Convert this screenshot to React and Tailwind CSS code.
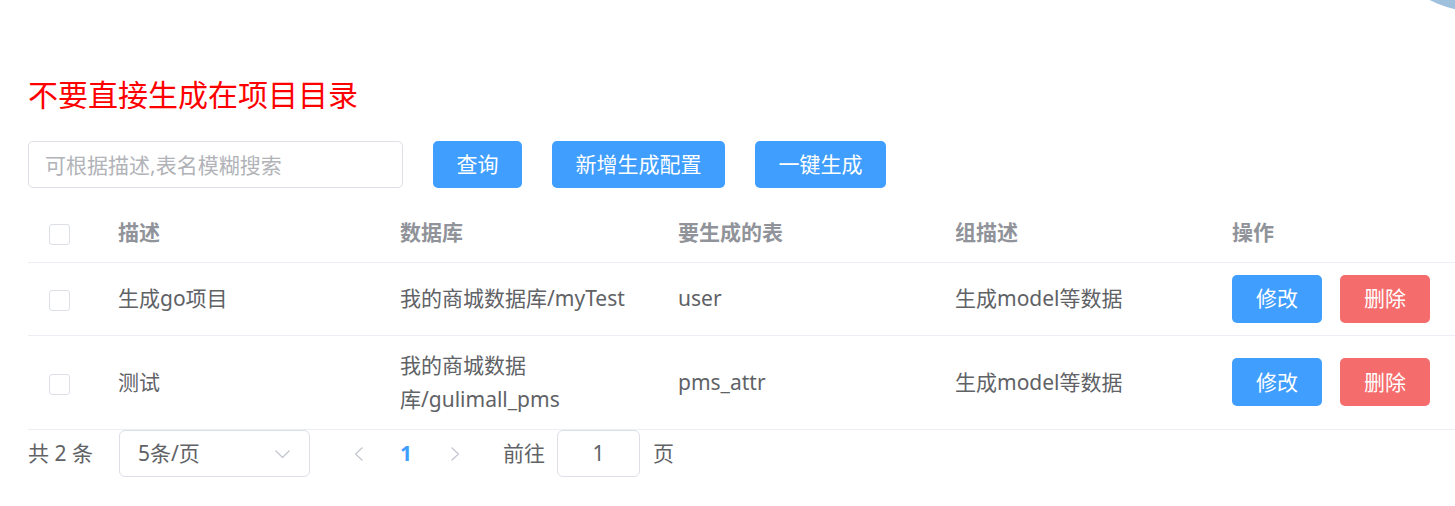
// App.jsx

const font = { fontFamily: '"Noto Sans", "Noto Sans CJK SC", sans-serif' };

const rows = [
  { id: 1, desc: '生成go项目', db: '我的商城数据库/myTest', table: 'user', group: '生成model等数据' },
  { id: 2, desc: '测试', db: '我的商城数据库/gulimall_pms', table: 'pms_attr', group: '生成model等数据' }
];

function Checkbox() {
  return <span className="inline-block w-[21px] h-[21px] border border-[#dcdfe6] rounded-[3px] bg-white align-middle" />;
}

export default function App() {
  return (
    <div
      className="relative w-full min-h-[506px] overflow-hidden bg-white text-[#606266]"
      style={{ fontFamily: '"Noto Sans", "Noto Sans CJK SC", sans-serif' }}
    >
      {/* Corner decoration */}
      <div className="absolute left-[1368px] top-[-212px] w-[224px] h-[224px] rounded-full bg-[#9fc1de]" />

      <div className="pl-[28px] pt-[72px]">
        {/* Title */}
        <h2 className="text-[30px] leading-[45px] text-[#ff0000] font-normal mb-[24px]">不要直接生成在项目目录</h2>

        {/* Search bar */}
        <div className="flex items-center">
          <input
            className="w-[375px] h-[47px] border border-[#dcdfe6] rounded-[5px] pl-[16px] text-[21px] outline-none placeholder:text-[#b1b3b8]"
            style={font}
            placeholder="可根据描述,表名模糊搜索"
          />
          <button className="ml-[30px] w-[89px] h-[47px] text-[21px] text-white bg-[#409eff] rounded-[5px]">查询</button>
          <button className="ml-[30px] w-[173px] h-[47px] text-[21px] text-white bg-[#409eff] rounded-[5px]">新增生成配置</button>
          <button className="ml-[30px] w-[131px] h-[47px] text-[21px] text-white bg-[#409eff] rounded-[5px]">一键生成</button>
        </div>

        {/* Table */}
        <table className="mt-[15px] table-fixed border-collapse w-[1461px] text-[21px] leading-[34.5px]">
          <colgroup>
            <col className="w-[70px]" />
            <col className="w-[282px]" />
            <col className="w-[278px]" />
            <col className="w-[277px]" />
            <col className="w-[277px]" />
            <col className="w-[277px]" />
          </colgroup>
          <thead>
            <tr className="border-b border-[#ebeef5] text-[#909399] font-bold text-left">
              <th className="py-[12px] pl-[21px]"><Checkbox /></th>
              <th className="py-[12px] px-[20px]">描述</th>
              <th className="py-[12px] px-[20px]">数据库</th>
              <th className="py-[12px] px-[20px]">要生成的表</th>
              <th className="py-[12px] px-[20px]">组描述</th>
              <th className="py-[12px] px-[20px]">操作</th>
            </tr>
          </thead>
          <tbody>
            {rows.map(row => (
              <tr key={row.id} className="border-b border-[#ebeef5]">
                <td className="py-[12px] pl-[21px]"><Checkbox /></td>
                <td className="py-[12px] px-[20px]">{row.desc}</td>
                <td className="py-[12px] px-[20px]">{row.db}</td>
                <td className="py-[12px] px-[20px]">{row.table}</td>
                <td className="py-[12px] px-[20px]">{row.group}</td>
                <td className="py-[12px] px-[20px] whitespace-nowrap">
                  <button className="h-[48px] px-[24px] text-white bg-[#409eff] rounded-[5px] align-middle">修改</button>
                  <button className="ml-[18px] h-[48px] px-[24px] text-white bg-[#f56c6c] rounded-[5px] align-middle">删除</button>
                </td>
              </tr>
            ))}
          </tbody>
        </table>

        {/* Pagination */}
        <div className="flex items-center h-[48px] text-[21px]">
          <span className="w-[91px]">共 2 条</span>
          <div className="w-[191px] h-[47px] border border-[#dcdfe6] rounded-[6px] flex items-center justify-between pl-[18px] pr-[19px]">
            <span>5条/页</span>
            <svg width="15" height="8" viewBox="0 0 15 8" fill="none" stroke="#c0c4cc" strokeWidth="1.2">
              <polyline points="0.5,0.5 7.5,7.5 14.5,0.5" />
            </svg>
          </div>
          <div className="ml-[24px] w-[50px] flex justify-center">
            <svg width="8" height="14" viewBox="0 0 8 14" fill="none" stroke="#c0c4cc" strokeWidth="1.2">
              <polyline points="7.5,0.5 0.5,7 7.5,13.5" />
            </svg>
          </div>
          <div className="w-[44px] text-center font-bold text-[#409eff]">1</div>
          <div className="w-[54px] flex justify-center">
            <svg width="8" height="14" viewBox="0 0 8 14" fill="none" stroke="#c0c4cc" strokeWidth="1.2">
              <polyline points="0.5,0.5 7.5,7 0.5,13.5" />
            </svg>
          </div>
          <span className="ml-[21px]">前往</span>
          <div className="ml-[12px] w-[83px] h-[47px] border border-[#dcdfe6] rounded-[6px] flex items-center justify-center">1</div>
          <span className="ml-[13px]">页</span>
        </div>
      </div>
    </div>
  );
}
